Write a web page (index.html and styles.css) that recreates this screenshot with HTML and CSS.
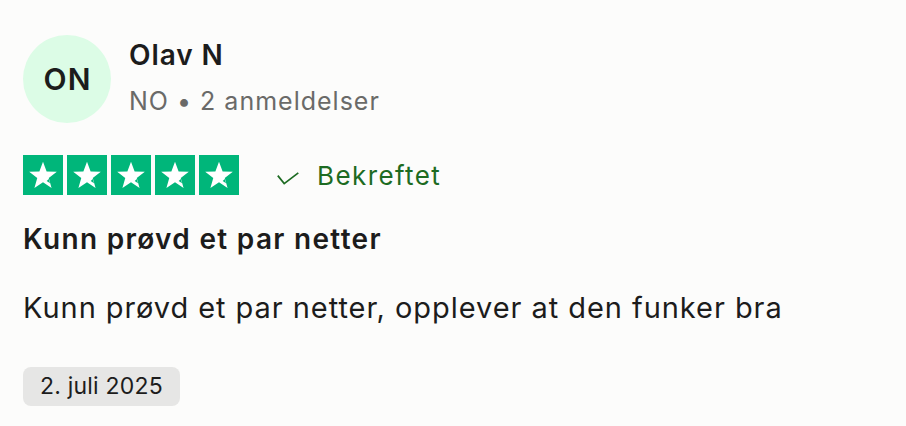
FILE: index.html
```html
<!DOCTYPE html>
<html lang="no">
<head>
<meta charset="utf-8">
<link rel="stylesheet" href="styles.css">
</head>
<body>
<article class="review">
  <header class="author">
    <div class="avatar">ON</div>
    <div class="meta">
      <div class="name">Olav N</div>
      <div class="sub">NO • 2 anmeldelser</div>
    </div>
  </header>
  <div class="rating">
    <div class="stars">
      <span class="star"><svg viewBox="0 0 24 24"><path d="M12 2.6l2.55 6.9 7.2.25-5.7 4.45 2 7.05L12 17.1l-6.05 4.15 2-7.05-5.7-4.45 7.2-.25z" fill="#fff"/><path d="M14.6 16.3L16.1 14.9l.85 2.95z" fill="#00b67a"/></svg></span>
      <span class="star"><svg viewBox="0 0 24 24"><path d="M12 2.6l2.55 6.9 7.2.25-5.7 4.45 2 7.05L12 17.1l-6.05 4.15 2-7.05-5.7-4.45 7.2-.25z" fill="#fff"/><path d="M14.6 16.3L16.1 14.9l.85 2.95z" fill="#00b67a"/></svg></span>
      <span class="star"><svg viewBox="0 0 24 24"><path d="M12 2.6l2.55 6.9 7.2.25-5.7 4.45 2 7.05L12 17.1l-6.05 4.15 2-7.05-5.7-4.45 7.2-.25z" fill="#fff"/><path d="M14.6 16.3L16.1 14.9l.85 2.95z" fill="#00b67a"/></svg></span>
      <span class="star"><svg viewBox="0 0 24 24"><path d="M12 2.6l2.55 6.9 7.2.25-5.7 4.45 2 7.05L12 17.1l-6.05 4.15 2-7.05-5.7-4.45 7.2-.25z" fill="#fff"/><path d="M14.6 16.3L16.1 14.9l.85 2.95z" fill="#00b67a"/></svg></span>
      <span class="star"><svg viewBox="0 0 24 24"><path d="M12 2.6l2.55 6.9 7.2.25-5.7 4.45 2 7.05L12 17.1l-6.05 4.15 2-7.05-5.7-4.45 7.2-.25z" fill="#fff"/><path d="M14.6 16.3L16.1 14.9l.85 2.95z" fill="#00b67a"/></svg></span>
    </div>
    <div class="verified">
      <svg class="check" viewBox="0 0 22 13"><path d="M0.8 3.6l6.4 8L21.3 0.8" fill="none" stroke="#1d6b22" stroke-width="1.7"/></svg>
      <span>Bekreftet</span>
    </div>
  </div>
  <h2 class="title">Kunn prøvd et par netter</h2>
  <p class="body">Kunn prøvd et par netter, opplever at den funker bra</p>
  <div class="date">2. juli 2025</div>
</article>
</body>
</html>
```
FILE: styles.css
```css
html, body {
  margin: 0;
  background: #fcfcfb;
}
body {
  font-family: Inter, "Liberation Sans", sans-serif;
  color: #1c1c1c;
}
.review {
  padding: 35px 23px;
  display: flex;
  flex-direction: column;
  align-items: flex-start;
}
.author {
  display: flex;
  align-items: flex-start;
  gap: 18px;
}
.avatar {
  width: 88px;
  height: 88px;
  border-radius: 50%;
  background: #dcfce6;
  display: flex;
  align-items: center;
  justify-content: center;
  font-size: 30px;
  font-weight: 600;
  letter-spacing: 1.2px;
  text-indent: 1.2px;
  color: #1c1c1c;
}
.meta {
  display: flex;
  flex-direction: column;
  gap: 15px;
  padding-top: 4px;
}
.name {
  font-size: 28px;
  font-weight: 600;
  line-height: 32px;
  letter-spacing: 0.9px;
}
.sub {
  font-size: 25px;
  color: #6a6a68;
  line-height: 30px;
  letter-spacing: 1px;
}
.rating {
  margin-top: 32px;
  display: flex;
  align-items: center;
}
.stars {
  display: flex;
  gap: 4px;
}
.star {
  width: 40px;
  height: 40px;
  background: #00b67a;
  display: flex;
  align-items: center;
  justify-content: center;
}
.star svg {
  width: 34px;
  height: 34px;
}
.verified {
  display: flex;
  align-items: center;
  margin-left: 38px;
  gap: 18px;
  color: #1d6b22;
  font-size: 26px;
  letter-spacing: 1.4px;
}
.check {
  width: 22px;
  height: 13px;
  margin-top: 6px;
}
.title {
  margin: 26.5px 0 0;
  font-size: 28px;
  font-weight: 600;
  line-height: 34px;
  letter-spacing: 1.3px;
}
.body {
  margin: 34px 0 0;
  font-size: 29px;
  line-height: 36px;
  letter-spacing: 0.95px;
}
.date {
  margin-top: 41px;
  background: #e6e6e5;
  border-radius: 8px;
  padding: 0 17px;
  height: 39px;
  line-height: 39px;
  font-size: 23px;
  letter-spacing: 0.2px;
}
```
